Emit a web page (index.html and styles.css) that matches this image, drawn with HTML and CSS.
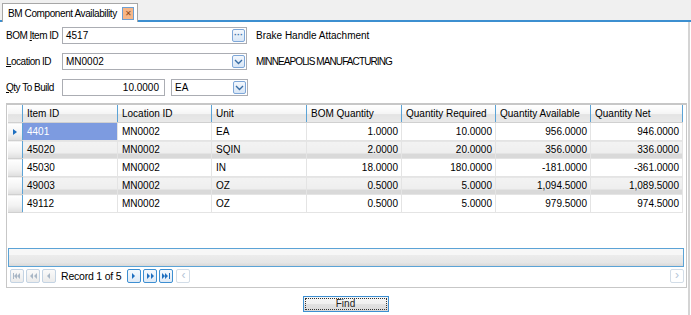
FILE: index.html
```html
<!DOCTYPE html>
<html>
<head>
    <title>BM Component Availability</title>
    <link rel="stylesheet" href="styles.css">
</head>
<body>
    <div class="tabstrip">
        <div class="tab">
            <span class="tab-title">BM Component Availability</span>
            <span class="tab-close">&#x2715;</span>
        </div>
    </div>
    <div class="panel">
        <div class="form-row">
            <label class="lbl">BOM <u>I</u>tem ID</label>
            <div class="field w-item">
                <span class="field-text">4517</span>
                <span class="field-btn dots">&middot;&middot;&middot;</span>
            </div>
            <span class="desc">Brake Handle Attachment</span>
        </div>
        <div class="form-row">
            <label class="lbl"><u>L</u>ocation ID</label>
            <div class="field w-loc">
                <span class="field-text">MN0002</span>
                <span class="field-btn"><svg width="9" height="6" viewBox="0 0 9 6"><path d="M1 1l3.5 3.5L8 1" fill="none" stroke="#3a6ea5" stroke-width="1.4"/></svg></span>
            </div>
            <span class="desc caps">MINNEAPOLIS MANUFACTURING</span>
        </div>
        <div class="form-row">
            <label class="lbl"><u>Q</u>ty To Build</label>
            <div class="field w-qty">
                <span class="field-text right">10.0000</span>
            </div>
            <div class="field w-unit">
                <span class="field-text">EA</span>
                <span class="field-btn"><svg width="9" height="6" viewBox="0 0 9 6"><path d="M1 1l3.5 3.5L8 1" fill="none" stroke="#3a6ea5" stroke-width="1.4"/></svg></span>
            </div>
        </div>

        <div class="grid">
            <table class="grid-table">
                <thead>
                    <tr>
                        <th class="sel"></th>
                        <th>Item ID</th>
                        <th>Location ID</th>
                        <th>Unit</th>
                        <th>BOM Quantity</th>
                        <th>Quantity Required</th>
                        <th>Quantity Available</th>
                        <th>Quantity Net</th>
                    </tr>
                </thead>
                <tbody>
                    <tr>
                        <td class="sel"><span class="arrow"></span></td>
                        <td class="current">4401</td>
                        <td>MN0002</td>
                        <td>EA</td>
                        <td class="num">1.0000</td>
                        <td class="num">10.0000</td>
                        <td class="num">956.0000</td>
                        <td class="num">946.0000</td>
                    </tr>
                    <tr class="alt">
                        <td class="sel"></td>
                        <td>45020</td>
                        <td>MN0002</td>
                        <td>SQIN</td>
                        <td class="num">2.0000</td>
                        <td class="num">20.0000</td>
                        <td class="num">356.0000</td>
                        <td class="num">336.0000</td>
                    </tr>
                    <tr>
                        <td class="sel"></td>
                        <td>45030</td>
                        <td>MN0002</td>
                        <td>IN</td>
                        <td class="num">18.0000</td>
                        <td class="num">180.0000</td>
                        <td class="num">-181.0000</td>
                        <td class="num">-361.0000</td>
                    </tr>
                    <tr class="alt">
                        <td class="sel"></td>
                        <td>49003</td>
                        <td>MN0002</td>
                        <td>OZ</td>
                        <td class="num">0.5000</td>
                        <td class="num">5.0000</td>
                        <td class="num">1,094.5000</td>
                        <td class="num">1,089.5000</td>
                    </tr>
                    <tr>
                        <td class="sel"></td>
                        <td>49112</td>
                        <td>MN0002</td>
                        <td>OZ</td>
                        <td class="num">0.5000</td>
                        <td class="num">5.0000</td>
                        <td class="num">979.5000</td>
                        <td class="num">974.5000</td>
                    </tr>
                </tbody>
            </table>
            <div class="grid-empty"></div>
            <div class="grid-footer"></div>
            <div class="navigator">
                <span class="nav-btn off"><svg width="8" height="6" viewBox="0 0 8 6"><path d="M0 0h1v6H0zM4 0v6L1 3zM7 0v6L4 3z" fill="#a9b7c6"/></svg></span>
                <span class="nav-btn off"><svg width="7" height="6" viewBox="0 0 7 6"><path d="M3 0v6L0 3zM7 0v6L4 3z" fill="#a9b7c6"/></svg></span>
                <span class="nav-btn off"><svg width="4" height="6" viewBox="0 0 4 6"><path d="M3 0v6L0 3z" fill="#a9b7c6"/></svg></span>
                <span class="nav-text">Record 1 of 5</span>
                <span class="nav-btn on"><svg width="4" height="6" viewBox="0 0 4 6"><path d="M0 0v6l3-3z" fill="#1e6fc0"/></svg></span>
                <span class="nav-btn on"><svg width="7" height="6" viewBox="0 0 7 6"><path d="M0 0v6l3-3zM4 0v6l3-3z" fill="#1e6fc0"/></svg></span>
                <span class="nav-btn on"><svg width="8" height="6" viewBox="0 0 8 6"><path d="M0 0v6l3-3zM3 0v6l3-3zM7 0h1v6H7z" fill="#1e6fc0"/></svg></span>
                <div class="hscroll">
                    <span class="scroll-btn">&lsaquo;</span>
                    <span class="scroll-track"></span>
                    <span class="scroll-btn">&rsaquo;</span>
                </div>
            </div>
        </div>

        <div class="actions">
            <button class="find-btn">Find</button>
        </div>
    </div>
</body>
</html>
```

FILE: styles.css
```css
body {
    margin: 0;
    font-family: "Liberation Sans", Arial, sans-serif;
    font-size: 10px;
    color: #000;
    background: #fff;
    width: 691px;
    height: 315px;
    overflow: hidden;
    white-space: nowrap;
}
.tabstrip {
    height: 18px;
    padding: 2px 0 0 2px;
    background: #f0f0f0;
    border-bottom: 2px solid #3c8fd0;
    display: flex;
    align-items: flex-end;
}
.tab {
    height: 19px;
    margin-bottom: -2px;
    width: 136px;
    box-sizing: border-box;
    background: #fff;
    border: 1px solid #a7a7a7;
    border-bottom: none;
    display: flex;
    align-items: center;
    padding: 0 3px 0 5px;
    justify-content: space-between;
}
.tab-title {
    letter-spacing: -0.4px;
}
.tab-close {
    width: 12px;
    height: 13px;
    box-sizing: border-box;
    border: 1px solid #6d9fd2;
    background: #f7b686;
    color: #8a4a20;
    font-size: 8px;
    line-height: 11px;
    text-align: center;
}
.panel {
    height: 295px;
    box-sizing: border-box;
    border-right: 2px solid #d4d4d4;
    margin-right: 1px;
    padding: 5px 0 0 6px;
}
.form-row {
    display: flex;
    align-items: center;
    height: 17px;
    margin-bottom: 9px;
}
.lbl {
    width: 56px;
    letter-spacing: -0.5px;
}
.field {
    height: 17px;
    box-sizing: border-box;
    border: 1px solid #abadb3;
    display: flex;
    align-items: center;
    background: #fff;
}
.field-text {
    flex: 1;
    padding: 0 3px;
}
.field-text.right {
    text-align: right;
    padding-right: 5px;
}
.field-btn {
    width: 13px;
    height: 13px;
    box-sizing: border-box;
    margin-right: 1px;
    border: 1px solid #7ea7d8;
    border-radius: 2px;
    background: linear-gradient(#f4f8fd, #d8e6f6);
    display: flex;
    align-items: center;
    justify-content: center;
    color: #3a6ea5;
    font-size: 9px;
    font-weight: bold;
    line-height: 1;
}
.w-item { width: 185px; }
.w-loc { width: 185px; }
.w-qty { width: 103px; }
.w-unit { width: 77px; margin-left: 6px; }
.desc {
    margin-left: 9px;
}
.desc.caps {
    letter-spacing: -0.9px;
}
.grid {
    margin-top: -2px;
    width: 681px;
    box-sizing: border-box;
    border: 1px solid #c7c7c7;
    border-top: 2px solid #c7c7c7;
    padding: 0 2px 2px 1px;
    background: #fff;
}
.grid-table {
    border-collapse: collapse;
    table-layout: fixed;
    width: 675px;
}
.grid-table th {
    height: 17px;
    line-height: 16px;
    padding: 0 0 0 4px;
    text-align: left;
    font-weight: normal;
    background: linear-gradient(#ffffff 0, #f4f4f4 55%, #e3e3e3 56%, #e9e9e9 100%);
    border-right: 1px solid #5ba3d6;
    border-bottom: 1px solid #d0d0d0;
}
.grid-table th.sel {
    width: 14px;
    padding: 0;
}
.grid-table th:nth-child(2) { width: 90px; }
.grid-table th:nth-child(3) { width: 89px; }
.grid-table th:nth-child(4) { width: 90px; }
.grid-table th:nth-child(5) { width: 90px; }
.grid-table th:nth-child(6) { width: 89px; }
.grid-table th:nth-child(7) { width: 90px; }
.grid-table td {
    height: 17px;
    line-height: 16px;
    padding: 0 3px 0 4px;
    border-right: 1px solid #e4e4e4;
    border-bottom: 1px solid #e4e4e4;
    overflow: hidden;
}
.grid-table tr.alt td {
    background: linear-gradient(#f3f3f3 0, #eeeeee 70%, #d9d9d9 71%, #d9d9d9 100%);
}
.grid-table td.sel {
    padding: 0;
    background: linear-gradient(#ffffff 0, #f2f2f2 60%, #dedede 100%);
    border-right: 1px solid #5ba3d6;
    border-bottom: 1px solid #d0d0d0;
    text-align: center;
}
.grid-table tr.alt td.sel {
    background: linear-gradient(#ffffff 0, #f2f2f2 60%, #dedede 100%);
}
.arrow {
    display: inline-block;
    width: 0;
    height: 0;
    border-top: 3px solid transparent;
    border-bottom: 3px solid transparent;
    border-left: 4px solid #1e6fc0;
    vertical-align: middle;
}
.grid-table td.current {
    background: #7d9be0;
    color: #fff;
}
.grid-table td.num {
    text-align: right;
}
.grid-empty {
    height: 35px;
}
.grid-footer {
    height: 19px;
    box-sizing: border-box;
    border: 1px solid #5ba3d6;
    background: linear-gradient(#f7f7f7 0, #f7f7f7 35%, #ececec 36%, #e6e6e6 80%, #d8d8d8 100%);
}
.navigator {
    display: flex;
    align-items: center;
    height: 18px;
    padding-left: 2px;
    gap: 2px;
}
.nav-btn {
    width: 14px;
    height: 14px;
    box-sizing: border-box;
    border: 1px solid #c3d3e3;
    border-radius: 2px;
    background: linear-gradient(#fafafa, #ebebeb);
    display: flex;
    align-items: center;
    justify-content: center;
}
.nav-btn.on {
    border-color: #3d8fd2;
    background: linear-gradient(#f4f9fe, #dfeaf6);
}
.nav-text {
    margin: 0 4px 0 3px;
    font-size: 10.5px;
    letter-spacing: -0.2px;
}
.hscroll {
    flex: 1;
    display: flex;
    align-items: center;
    margin-left: 1px;
}
.scroll-btn {
    width: 14px;
    height: 14px;
    box-sizing: border-box;
    border: 1px solid #d2dde8;
    border-radius: 2px;
    color: #b5c6d8;
    font-size: 12px;
    line-height: 11px;
    text-align: center;
}
.scroll-track {
    flex: 1;
}
.actions {
    display: flex;
    justify-content: center;
    padding-top: 8px;
    padding-right: 3px;
}
.find-btn {
    width: 86px;
    height: 16px;
    padding: 0;
    font-family: "Liberation Sans", Arial, sans-serif;
    font-size: 10px;
    color: #222;
    border: 1px solid #3d8fd2;
    outline: 1px dotted #333;
    outline-offset: -3px;
    background: linear-gradient(#f6f6f6 0, #f0f0f0 50%, #e2e2e2 51%, #dadada 100%);
    line-height: 12px;
}
```
